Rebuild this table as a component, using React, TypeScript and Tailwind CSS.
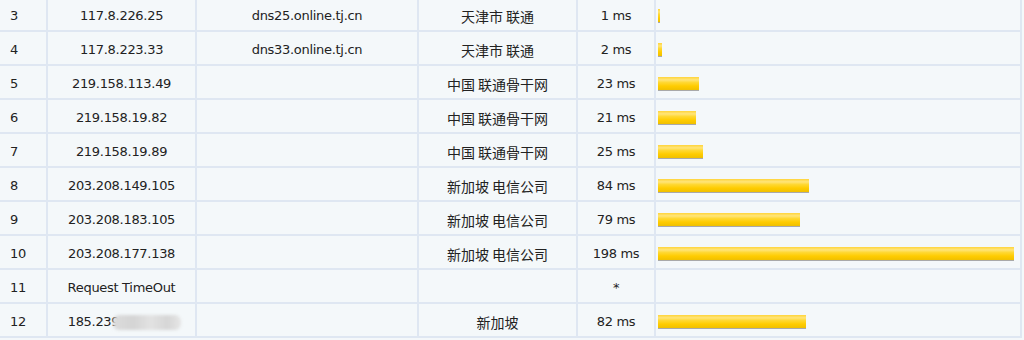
import React from "react";

type Row = {
  n: number;
  ip: string;
  host: string;
  loc: string;
  ms: string;
  v: number | null;
  blur?: boolean;
};

const rows: Row[] = [
  { n: 3, ip: "117.8.226.25", host: "dns25.online.tj.cn", loc: "天津市 联通", ms: "1 ms", v: 1 },
  { n: 4, ip: "117.8.223.33", host: "dns33.online.tj.cn", loc: "天津市 联通", ms: "2 ms", v: 2.3 },
  { n: 5, ip: "219.158.113.49", host: "", loc: "中国 联通骨干网", ms: "23 ms", v: 23 },
  { n: 6, ip: "219.158.19.82", host: "", loc: "中国 联通骨干网", ms: "21 ms", v: 21 },
  { n: 7, ip: "219.158.19.89", host: "", loc: "中国 联通骨干网", ms: "25 ms", v: 25 },
  { n: 8, ip: "203.208.149.105", host: "", loc: "新加坡 电信公司", ms: "84 ms", v: 84 },
  { n: 9, ip: "203.208.183.105", host: "", loc: "新加坡 电信公司", ms: "79 ms", v: 79 },
  { n: 10, ip: "203.208.177.138", host: "", loc: "新加坡 电信公司", ms: "198 ms", v: 198 },
  { n: 11, ip: "Request TimeOut", host: "", loc: "", ms: "*", v: null },
  { n: 12, ip: "185.239", host: "", loc: "新加坡", ms: "82 ms", v: 82, blur: true },
];

const cell =
  "h-[34px] border-b-2 border-r-2 border-[#dfe7f2] flex items-center pt-[4px]";

export default function App() {
  return (
    <div
      className="w-[1024px] h-[340px] overflow-hidden bg-[#f4f8fa] text-[#222222]"
      style={{ fontFamily: '"DejaVu Sans", "Noto Sans CJK SC", sans-serif' }}
    >
      <div className="-mt-[2px] grid grid-cols-[48px_149px_222px_159px_78px_366px] text-[13px] tracking-[-0.3px]">
        {rows.map((r) => (
          <React.Fragment key={r.n}>
            <div className={`${cell} pl-[10px]`}>{r.n}</div>
            <div className={`${cell} justify-center`}>
              {r.blur ? (
                <span className="flex items-center pl-[6px]">
                  <span>{r.ip}</span>
                  <span className="relative -ml-[6px] inline-block h-[15px] w-[68px] rounded-[6px] bg-[linear-gradient(90deg,#dcdcdc_0%,#d4d4d4_30%,#e2e2e2_55%,#d6d6d6_80%,#e6e6e6_100%)] blur-[1.5px]" />
                </span>
              ) : (
                r.ip
              )}
            </div>
            <div className={`${cell} justify-center`}>{r.host}</div>
            <div
              className={`${cell} justify-center text-[14px] tracking-normal`}
              style={{ fontFamily: '"Noto Sans CJK SC", "DejaVu Sans", sans-serif' }}
            >
              {r.loc}
            </div>
            <div className={`${cell} justify-center`}>{r.ms}</div>
            <div className={`${cell} pl-[2px]`}>
              {r.v !== null && (
                <div
                  className="h-[14px] border-b-[1.5px] border-[#a9a9a9] bg-[linear-gradient(180deg,#ffd43a_0%,#ffe57a_22%,#ffd833_42%,#ffcc00_70%,#f0c000_100%)]"
                  style={{ width: `${Math.max(1.5, r.v * 1.8)}px` }}
                />
              )}
            </div>
          </React.Fragment>
        ))}
      </div>
    </div>
  );
}
